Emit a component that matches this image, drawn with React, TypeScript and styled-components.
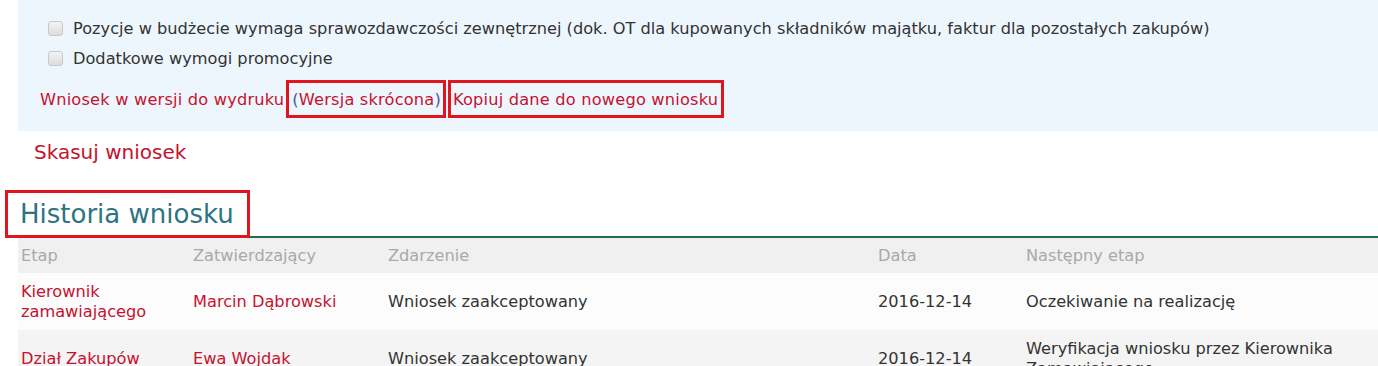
import styled, { createGlobalStyle } from "styled-components";

const GlobalStyle = createGlobalStyle`
  body {
    margin: 0;
    background: #fff;
    font-family: "DejaVu Sans", Verdana, sans-serif;
    font-size: 16.2px;
    color: #333;
  }
`;

const RED = "#c41230";
const MARK = "#e2151f";

const Page = styled.div`
  width: 1378px;
  overflow: hidden;
`;

const Panel = styled.div`
  margin-left: 18px;
  background: #eef6fd;
  padding: 13px 0 13px 22px;
`;

const CheckRow = styled.label`
  display: flex;
  align-items: center;
  gap: 10px;
  height: 30px;
  padding-left: 8px;
  color: #333;
`;

const Box = styled.span`
  width: 13px;
  height: 13px;
  border: 1px solid #c9c9c9;
  border-radius: 3px;
  background: linear-gradient(#f4f4f4, #dcdcdc);
  flex: none;
`;

const Links = styled.div`
  display: flex;
  align-items: center;
  margin-top: 7px;
  color: ${RED};
  letter-spacing: 0.2px;
`;

const Link = styled.a<{ $size?: number }>`
  color: ${RED};
  text-decoration: none;
  font-size: ${(p) => (p.$size ? `${p.$size}px` : "inherit")};
  cursor: pointer;
`;

const Marked = styled.span<{ $pad: string }>`
  display: inline-flex;
  align-items: center;
  box-sizing: border-box;
  height: 38px;
  margin-left: 2px;
  border: 3px solid ${MARK};
  padding: ${(p) => p.$pad};
`;

const Paren = styled.span`
  color: #3d5a9e;
`;

const DeleteRow = styled.div`
  padding: 6px 0 0 34px;
  height: 30px;
  display: flex;
  align-items: center;
`;

const HeadingBar = styled.div`
  margin-top: 23px;
  margin-left: 5px;
  display: flex;
  border-bottom: 2px solid #1d6e4e;
  height: 46px;
`;

const Heading = styled.h2`
  margin: 0 0 -2px;
  border: 3px solid ${MARK};
  padding: 0 13px 0 12px;
  display: flex;
  align-items: center;
  font-weight: normal;
  font-size: 26px;
  color: #2c7482;
  background: #fff;
`;

const Table = styled.table`
  margin-left: 18px;
  width: 1360px;
  border-collapse: collapse;
  table-layout: fixed;
`;

const Th = styled.th<{ $w?: number }>`
  width: ${(p) => (p.$w ? `${p.$w}px` : "auto")};
  height: 35px;
  padding: 0 3px;
  text-align: left;
  font-weight: normal;
  color: #a9a9a9;
  background: #f0f0f0;
`;

const Tr = styled.tr<{ $alt?: boolean }>`
  background: ${(p) => (p.$alt ? "#f4f4f4" : "#fcfcfc")};
`;

const Td = styled.td<{ $red?: boolean }>`
  height: 57px;
  padding: 0 3px;
  line-height: 20px;
  vertical-align: middle;
  color: ${(p) => (p.$red ? RED : "#333")};
`;

const rows = [
  {
    etap: "Kierownik zamawiającego",
    who: "Marcin Dąbrowski",
    event: "Wniosek zaakceptowany",
    date: "2016-12-14",
    next: "Oczekiwanie na realizację",
  },
  {
    etap: "Dział Zakupów",
    who: "Ewa Wojdak",
    event: "Wniosek zaakceptowany",
    date: "2016-12-14",
    next: "Weryfikacja wniosku przez Kierownika Zamawiającego",
  },
];

export default function App() {
  return (
    <Page>
      <GlobalStyle />
      <Panel>
        <CheckRow>
          <Box />
          Pozycje w budżecie wymaga sprawozdawczości zewnętrznej (dok. OT dla
          kupowanych składników majątku, faktur dla pozostałych zakupów)
        </CheckRow>
        <CheckRow>
          <Box />
          Dodatkowe wymogi promocyjne
        </CheckRow>
        <Links>
          <Link>Wniosek w wersji do wydruku</Link>
          <Marked $pad="0 2px 0 3px">
            <Paren>(</Paren>
            <Link>Wersja skrócona</Link>
            <Paren>)</Paren>
          </Marked>
          <Marked $pad="0 3px 0 2px">
            <Link>Kopiuj dane do nowego wniosku</Link>
          </Marked>
        </Links>
      </Panel>
      <DeleteRow>
        <Link $size={20}>Skasuj wniosek</Link>
      </DeleteRow>
      <HeadingBar>
        <Heading>Historia wniosku</Heading>
      </HeadingBar>
      <Table>
        <thead>
          <tr>
            <Th $w={166}>Etap</Th>
            <Th $w={189}>Zatwierdzający</Th>
            <Th $w={484}>Zdarzenie</Th>
            <Th $w={142}>Data</Th>
            <Th>Następny etap</Th>
          </tr>
        </thead>
        <tbody>
          {rows.map((r, i) => (
            <Tr key={i} $alt={i % 2 === 1}>
              <Td $red>{r.etap}</Td>
              <Td $red>{r.who}</Td>
              <Td>{r.event}</Td>
              <Td>{r.date}</Td>
              <Td>{r.next}</Td>
            </Tr>
          ))}
        </tbody>
      </Table>
    </Page>
  );
}
